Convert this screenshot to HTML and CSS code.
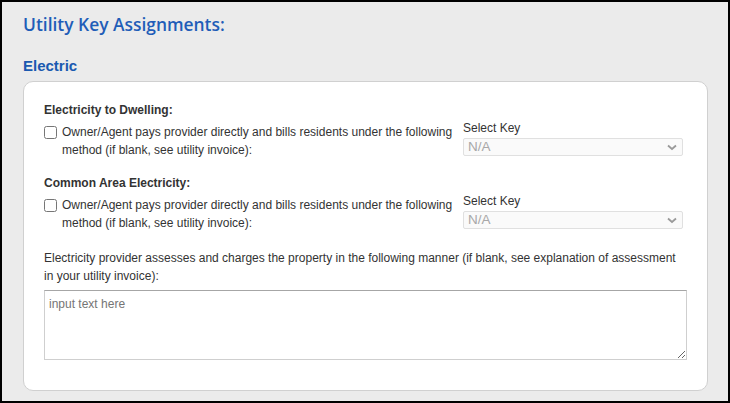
FILE: index.html
```html
<!DOCTYPE html>
<html>
<head>
<meta charset="utf-8">
<link rel="stylesheet" href="styles.css">
</head>
<body>
<div class="frame">
  <h1 class="title">Utility Key Assignments:</h1>
  <h2 class="section-title">Electric</h2>
  <div class="card">
    <div class="group">
      <div class="group-label">Electricity to Dwelling:</div>
      <div class="row">
        <label class="check">
          <input type="checkbox">
          <span>Owner/Agent pays provider directly and bills residents under the following method (if blank, see utility invoice):</span>
        </label>
        <div class="key">
          <div class="key-label">Select Key</div>
          <div class="select">
            <span>N/A</span>
            <svg width="10" height="7" viewBox="0 0 10 7"><polyline points="1,1.5 5,5 9,1.5" fill="none" stroke="#9a9a9a" stroke-width="1.8"/></svg>
          </div>
        </div>
      </div>
    </div>
    <div class="group">
      <div class="group-label">Common Area Electricity:</div>
      <div class="row">
        <label class="check">
          <input type="checkbox">
          <span>Owner/Agent pays provider directly and bills residents under the following method (if blank, see utility invoice):</span>
        </label>
        <div class="key">
          <div class="key-label">Select Key</div>
          <div class="select">
            <span>N/A</span>
            <svg width="10" height="7" viewBox="0 0 10 7"><polyline points="1,1.5 5,5 9,1.5" fill="none" stroke="#9a9a9a" stroke-width="1.8"/></svg>
          </div>
        </div>
      </div>
    </div>
    <p class="note">Electricity provider assesses and charges the property in the following manner (if blank, see explanation of assessment in your utility invoice):</p>
    <textarea class="notes" placeholder="input text here"></textarea>
  </div>
</div>
</body>
</html>
```
FILE: styles.css
```css
* { box-sizing: border-box; }
html, body { margin: 0; padding: 0; }
body {
  font-family: "Liberation Sans", Arial, sans-serif;
  font-size: 12px;
  color: #333;
}
.frame {
  width: 730px;
  height: 403px;
  border: 2px solid #000;
  background: #ebebeb;
  padding: 11px 20px 0 21px;
  overflow: hidden;
}
.title {
  margin: 0;
  font-family: "Open Sans", sans-serif;
  font-weight: 600;
  font-size: 17.4px;
  line-height: 22px;
  color: #1f5db8;
}
.section-title {
  margin: 22px 0 6px;
  font-family: "Liberation Sans", Arial, sans-serif;
  font-weight: bold;
  font-size: 15px;
  line-height: 18px;
  color: #1a59b0;
}
.card {
  background: #fff;
  border: 1px solid #d0d0d0;
  border-radius: 10px;
  height: 310px;
  padding: 19px 20px 30px 20px;
}
.group + .group { margin-top: 15px; }
.group-label {
  font-weight: bold;
  line-height: 18px;
}
.row {
  display: grid;
  grid-template-columns: 415px 220px;
  column-gap: 4px;
}
.check {
  display: flex;
  align-items: flex-start;
  gap: 5px;
  padding-top: 4px;
  line-height: 18px;
}
.check input {
  margin: 3px 0 0 0;
  width: 13px;
  height: 13px;
  flex: none;
}
.key-label { line-height: 18px; }
.select {
  margin-top: 1px;
  height: 18px;
  border: 1px solid #e0e0e0;
  border-radius: 2px;
  background: #fafafa;
  color: #a8a8a8;
  font-size: 13.5px;
  line-height: 16px;
  padding: 0 5px 0 4px;
  display: flex;
  align-items: center;
  justify-content: space-between;
}
.note {
  margin: 17px 0 5px;
  line-height: 18px;
}
.notes {
  display: block;
  width: 643px;
  height: 70px;
  margin: 0;
  border: 1px solid #cfcfcf;
  border-top-color: #a6a6a6;
  padding: 6px 4px;
  font-family: "Liberation Sans", Arial, sans-serif;
  font-size: 12px;
  color: #333;
}
.notes::placeholder { color: #757575; }
```
